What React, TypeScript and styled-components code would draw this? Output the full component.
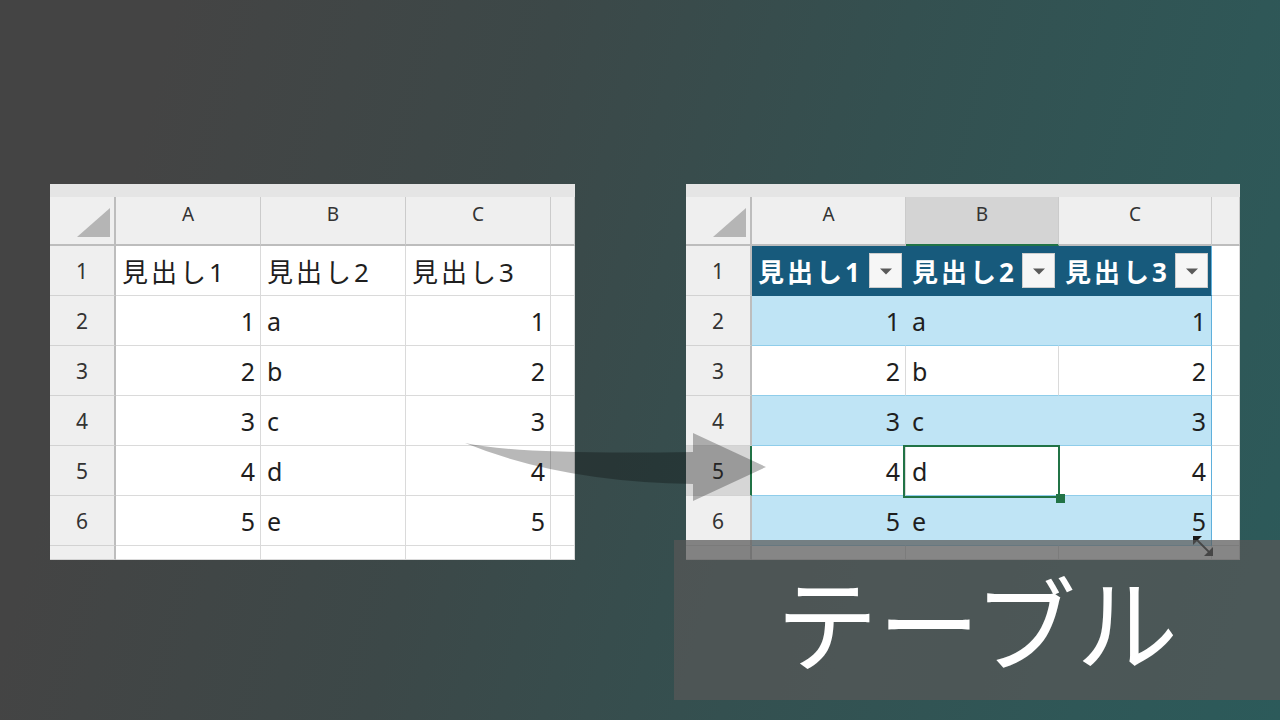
import React from 'react';
import styled, { createGlobalStyle, css } from 'styled-components';

const GlobalStyle = createGlobalStyle`
  html, body { margin: 0; padding: 0; background: #444; }
  body { font-family: "Noto Sans", "Noto Sans CJK JP", sans-serif; }
  * { box-sizing: border-box; }
`;

const Stage = styled.div`
  position: relative;
  width: 1280px;
  height: 720px;
  overflow: hidden;
  display: flex;
  align-items: flex-start;
  gap: 111px;
  padding: 184px 0 0 50px;
  background: linear-gradient(105deg, #444444 0%, #444444 12%, #3c4848 38%, #345050 62%, #2f5757 86%, #2c5a5a 100%);
`;

const Sheet = styled.div<{ $cols: string }>`
  display: grid;
  grid-template-columns: ${(p) => p.$cols};
  grid-template-rows: 13px 49px repeat(6, 50px) 14px;
  background: #ffffff;
  overflow: hidden;
`;

const TopStrip = styled.div`
  grid-column: 1 / -1;
  background: #e5e5e5;
`;

const Corner = styled.div`
  position: relative;
  background: #efefef;
  border-right: 2px solid #bdbdbd;
  border-bottom: 2px solid #bdbdbd;
  &::after {
    content: '';
    position: absolute;
    right: 4px;
    bottom: 7px;
    width: 0;
    height: 0;
    border-left: 33px solid transparent;
    border-bottom: 29px solid #b5b5b5;
  }
`;

const ColHead = styled.div<{ $selected?: boolean }>`
  display: flex;
  align-items: center;
  justify-content: center;
  padding-bottom: 14px;
  font-size: 19px;
  color: #333;
  background: ${(p) => (p.$selected ? '#d4d4d4' : '#efefef')};
  border-right: 1px solid #cbcbcb;
  border-bottom: 2px solid ${(p) => (p.$selected ? '#217346' : '#bdbdbd')};
`;

const RowHead = styled.div<{ $selected?: boolean }>`
  display: flex;
  align-items: center;
  justify-content: center;
  font-size: 21px;
  color: #333;
  background: ${(p) => (p.$selected ? '#d6d6d6' : '#efefef')};
  border-right: 2px solid ${(p) => (p.$selected ? '#217346' : '#bdbdbd')};
  border-bottom: 1px solid #d2d2d2;
`;

type Tone = 'plain' | 'thead' | 'band' | 'white';

const toneStyles: Record<Tone, ReturnType<typeof css>> = {
  plain: css`
    background: #ffffff;
    border-right-color: #dadada;
    border-bottom-color: #dadada;
  `,
  thead: css`
    background: #175a7c;
    border-right-color: #175a7c;
    border-bottom-color: #175a7c;
    color: #ffffff;
    font-weight: 700;
  `,
  band: css`
    background: #bfe4f5;
    border-right-color: #bfe4f5;
    border-bottom-color: #8fcdea;
  `,
  white: css`
    background: #ffffff;
    border-right-color: #dadada;
    border-bottom-color: #8fcdea;
  `,
};

const Cell = styled.div<{ $tone: Tone; $align: 'left' | 'right'; $edge?: boolean; $selected?: boolean; $thead?: boolean }>`
  position: relative;
  display: flex;
  align-items: center;
  justify-content: ${(p) => (p.$align === 'right' ? 'flex-end' : 'flex-start')};
  min-width: 0;
  padding: 0 ${(p) => (p.$thead ? '3px' : '5px')} 0 6px;
  font-size: 25px;
  color: #1e1e1e;
  white-space: nowrap;
  border-right: 1px solid;
  border-bottom: 1px solid;
  ${(p) => toneStyles[p.$tone]}
  ${(p) =>
    p.$edge &&
    css`
      border-right-color: #5fb0dc;
    `}
  ${(p) =>
    p.$selected &&
    css`
      &::after {
        content: '';
        position: absolute;
        left: -3px;
        top: -1px;
        right: -2px;
        bottom: -3px;
        border: 2px solid #217346;
        pointer-events: none;
        z-index: 2;
      }
      &::before {
        content: '';
        position: absolute;
        right: -7px;
        bottom: -8px;
        width: 9px;
        height: 9px;
        background: #217346;
        z-index: 3;
      }
    `}
`;

const HeadText = styled.span`
  letter-spacing: 3px;
  font-size: 26px;
`;

const FilterButton = styled.span`
  position: relative;
  flex-shrink: 0;
  margin-left: auto;
  width: 33px;
  height: 35px;
  background: #f6f6f6;
  border: 1px solid #cdcdcd;
  &::after {
    content: '';
    position: absolute;
    left: 50%;
    top: 50%;
    transform: translate(-50%, -40%);
    border-left: 6px solid transparent;
    border-right: 6px solid transparent;
    border-top: 6px solid #5a5a5a;
  }
`;

const ResizeHandle = styled.svg`
  position: absolute;
  right: -3px;
  bottom: -12px;
  z-index: 4;
`;

const ArrowLayer = styled.svg`
  position: absolute;
  left: 0;
  top: 0;
  pointer-events: none;
  z-index: 5;
`;

const Caption = styled.div`
  position: absolute;
  left: 674px;
  top: 540px;
  width: 606px;
  height: 160px;
  display: flex;
  align-items: center;
  justify-content: center;
  background: rgba(88, 88, 88, 0.72);
  color: #ffffff;
  font-family: "Noto Sans CJK JP", "Noto Sans", sans-serif;
  font-weight: 400;
  font-size: 102px;
  line-height: 1;
  z-index: 6;
`;

const DATA: string[][] = [
  ['見出し1', '見出し2', '見出し3'],
  ['1', 'a', '1'],
  ['2', 'b', '2'],
  ['3', 'c', '3'],
  ['4', 'd', '4'],
  ['5', 'e', '5'],
];

const LETTERS = ['A', 'B', 'C'];

type SheetProps = {
  cols: string;
  table?: boolean;
  selCol?: number;
  selRow?: number;
};

function SheetView({ cols, table, selCol, selRow }: SheetProps) {
  const toneFor = (r: number): Tone => {
    if (!table) return 'plain';
    if (r === 0) return 'thead';
    return r % 2 === 1 ? 'band' : 'white';
  };
  return (
    <Sheet $cols={cols}>
      <TopStrip />
      <Corner />
      {LETTERS.map((l, i) => (
        <ColHead key={l} $selected={selCol === i}>
          {l}
        </ColHead>
      ))}
      <ColHead />
      {DATA.map((row, r) => (
        <React.Fragment key={r}>
          <RowHead $selected={selRow === r}>{r + 1}</RowHead>
          {row.map((v, c) => {
            const isHead = r === 0;
            const align = isHead || c === 1 ? 'left' : 'right';
            const selected = table && selRow === r && selCol === c;
            return (
              <Cell
                key={c}
                $tone={toneFor(r)}
                $align={align}
                $edge={table && c === 2}
                $selected={selected}
                $thead={isHead && table}
              >
                {isHead ? <HeadText>{v}</HeadText> : v}
                {isHead && table && <FilterButton />}
                {table && r === DATA.length - 1 && c === 2 && (
                  <ResizeHandle width="22" height="22" viewBox="0 0 22 22">
                    <line x1="4" y1="4" x2="18" y2="18" stroke="#1a1a1a" strokeWidth="1.8" />
                    <polygon points="1,1 10,1 1,10" fill="#1a1a1a" />
                    <polygon points="21,21 12,21 21,12" fill="#1a1a1a" />
                  </ResizeHandle>
                )}
              </Cell>
            );
          })}
          <Cell $tone="plain" $align="left" />
        </React.Fragment>
      ))}
      <RowHead />
      {[0, 1, 2, 3].map((c) => (
        <Cell key={c} $tone="plain" $align="left" />
      ))}
    </Sheet>
  );
}

export default function App() {
  return (
    <>
      <GlobalStyle />
      <Stage>
        <SheetView cols="66px 145px 145px 145px 24px" />
        <SheetView cols="66px 154px 153px 153px 28px" table selCol={1} selRow={4} />
        <ArrowLayer width="1280" height="720" viewBox="0 0 1280 720">
          <path
            d="M 465 443 Q 520 455 693 452 L 693 433 L 766 467 L 693 501 L 693 484 Q 560 482 465 443 Z"
            fill="rgba(0,0,0,0.28)"
          />
        </ArrowLayer>
        <Caption>テーブル</Caption>
      </Stage>
    </>
  );
}
